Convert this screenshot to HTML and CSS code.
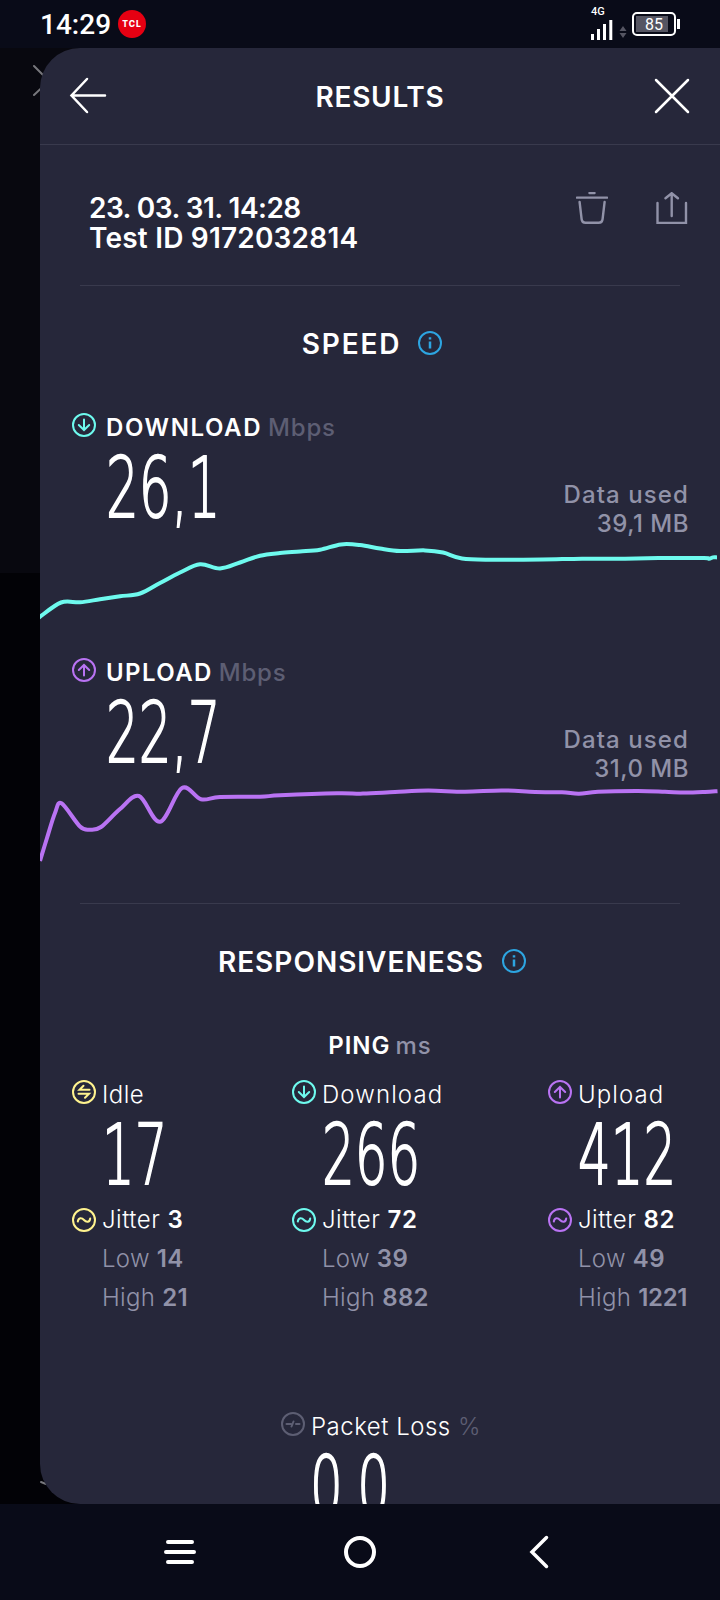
FILE: index.html
```
<!DOCTYPE html>
<html lang="en">
<head>
  <meta charset="UTF-8" />
  <meta name="viewport" content="width=device-width, initial-scale=1.0" />
  <title>Results</title>
  <link rel="stylesheet" href="styles.css">
</head>
<body>

  <!-- shared icons -->
  <svg class="defs" width="0" height="0">
    <symbol id="i-down" viewBox="0 0 24 24"><circle cx="12" cy="12" r="11" /><path d="M12 6.5v10.5M6.8 12l5.2 5 5.2-5" /></symbol>
    <symbol id="i-up" viewBox="0 0 24 24"><circle cx="12" cy="12" r="11" /><path d="M12 17.500V7M6.800 12l5.200-5 5.200 5" /></symbol>
    <symbol id="i-idle" viewBox="0 0 24 24"><circle cx="12" cy="12" r="11" /><path d="M17.500 9.800H7.500l4-4M6.500 13.800h10.500l-4 4" /></symbol>
    <symbol id="i-jitter" viewBox="0 0 24 24"><circle cx="12" cy="12" r="11" /><path d="M5.800 13.500c.6-4.200 4-4 6.200-1.500s5.600 2.700 6.200-1.500" /></symbol>
    <symbol id="i-loss" viewBox="0 0 24 24"><circle cx="12" cy="12" r="11" /><path d="M5.500 12h4.500M15 12h3.500M10.500 14.500l2-5" /></symbol>
    <symbol id="i-info" viewBox="0 0 24 24"><circle cx="12" cy="12" r="11" /><path class="i-stem" d="M12 10.500v7M12 6.200v2.200" /></symbol>
  </svg>

  <div class="status">
    <span class="clock">14:29</span>
    <span class="tcl">TCL</span>
    <span class="signal">
      <span class="net">4G</span>
      <svg width="24" height="22" viewBox="0 0 24 22"><path d="M2.500 15v6M8.500 10v11M14.500 5v16M20.800 1v20" /></svg>
    </span>
    <svg class="traffic" width="8" height="12" viewBox="0 0 8 12"><path d="M4 0l3.500 5h-7zM4 12L.5 7h7z" /></svg>
    <span class="battery"><span class="level">85</span></span>
  </div>

  <main>
    <svg class="behind" width="60" height="1456" viewBox="0 0 60 1456"><path d="M34 18l15 15-15 14M41 1434l5 2" /></svg>

    <div class="sheet">
      <header>
        <svg width="40" height="40" viewBox="0 0 40 40"><path d="M19 3L3.500 19.500 19 36M3.500 19.500H37" /></svg>
        <h1>RESULTS</h1>
        <svg width="40" height="40" viewBox="0 0 40 40"><path d="M4 4l32 32M36 4L4 36" /></svg>
      </header>

      <div class="meta">
        <div class="meta-text">
          <div class="date">23. 03. 31. 14:28</div>
          <div class="test-id">Test ID 9172032814</div>
        </div>
        <svg class="trash" width="32" height="32" viewBox="0 0 32 32"><path d="M13.500 1h5M1 5.600h30M3.600 10l2 17q.4 3.800 4 3.800h13q3.600 0 4-3.800l2-17" /></svg>
        <svg width="32" height="32" viewBox="0 0 32 32"><path d="M1.500 11v20h28.500V11M15.700 24V1.500M9.500 6.200l6.200-5 6.200 5" /></svg>
      </div>

      <div class="title">
        <h2 class="t-speed">SPEED</h2>
        <svg class="icon info"><use href="#i-info" /></svg>
      </div>

      <section class="speed">
        <div class="label">
          <svg class="icon teal"><use href="#i-down" /></svg>
          <b class="t-download">DOWNLOAD</b><span class="unit">Mbps</span>
        </div>
        <div class="reading">
          <div class="num">26,1</div>
          <div class="used">Data used<br><span class="mb">39,1 MB</span></div>
        </div>
        <svg class="chart teal" width="680" height="116" viewBox="40 530 680 116"><path id="downChart" /></svg>
      </section>

      <section class="speed">
        <div class="label">
          <svg class="icon purple"><use href="#i-up" /></svg>
          <b class="t-upload">UPLOAD</b><span class="unit">Mbps</span>
        </div>
        <div class="reading">
          <div class="num">22,7</div>
          <div class="used">Data used<br><span class="mb">31,0 MB</span></div>
        </div>
        <svg class="chart purple" width="680" height="116" viewBox="40 775 680 116"><path id="upChart" /></svg>
      </section>

      <div class="title ruled">
        <h2 class="t-resp">RESPONSIVENESS</h2>
        <svg class="icon info"><use href="#i-info" /></svg>
      </div>

      <div class="ping-title"><b>PING</b><span>ms</span></div>

      <div class="pings">
        <div class="ping">
          <div class="row"><svg class="icon yellow"><use href="#i-idle" /></svg><span>Idle</span></div>
          <div class="num">17</div>
          <div class="row jitter"><svg class="icon yellow"><use href="#i-jitter" /></svg><span>Jitter <b>3</b></span></div>
          <div class="range">Low <b>14</b><br>High <b>21</b></div>
        </div>
        <div class="ping">
          <div class="row"><svg class="icon teal"><use href="#i-down" /></svg><span class="wide">Download</span></div>
          <div class="num">266</div>
          <div class="row jitter"><svg class="icon teal"><use href="#i-jitter" /></svg><span>Jitter <b>72</b></span></div>
          <div class="range">Low <b>39</b><br>High <b>882</b></div>
        </div>
        <div class="ping">
          <div class="row"><svg class="icon purple"><use href="#i-up" /></svg><span class="wide">Upload</span></div>
          <div class="num">412</div>
          <div class="row jitter"><svg class="icon purple"><use href="#i-jitter" /></svg><span>Jitter <b>82</b></span></div>
          <div class="range">Low <b>49</b><br>High <b class="tight">1221</b></div>
        </div>
      </div>

      <div class="loss">
        <div class="row"><svg class="icon grey"><use href="#i-loss" /></svg><span>Packet Loss <span class="pct">%</span></span></div>
        <div class="num">0,0</div>
      </div>
    </div>
  </main>

  <nav>
    <svg width="40" height="40" viewBox="0 0 40 40"><path d="M8 10h24M6 20h28M8 30h24" /></svg>
    <svg width="40" height="40" viewBox="0 0 40 40"><circle cx="20" cy="20" r="14" /></svg>
    <svg width="40" height="40" viewBox="0 0 40 40"><path class="thin" d="M26.500 5.500L12 20l14.500 14.500" /></svg>
  </nav>

  <script>
    const down = [[39,617.5],[61,602.5],[80,602.3],[100,599.3],[120,596.3],[140,593.5],[160,583],[180,572.5],[200,564.3],[220,568.5],[240,562.5],[260,555.7],[280,553],[300,551.5],[320,549.7],[341,544.4],[360,545],[380,548.5],[400,551],[425,550.4],[443,552.5],[462,558.5],[492,559.7],[542,559.5],[582,558.7],[625,558.7],[665,558],[704,558],[709,558.8],[713,557.4],[717,557.4]];
    const up = [[40,861],[47,838],[55,813],[61.5,803.3],[80,826.5],[90,829.7],[101,827],[120,809],[139,796],[160,821.8],[182,788],[201,799.3],[220,797],[260,796.7],[280,795.3],[337,793.3],[363,793.6],[395,792],[428,790.6],[465,791.7],[502,790.4],[535,792],[562,792.3],[579,793.7],[598,791.7],[638,791],[665,791.8],[685,792.6],[705,792],[717.5,791.2]];

    // smooth line through all the samples
    function drawLine(id, pts) {
      let d = `M${pts[0][0]} ${pts[0][1]}`;
      for (let i = 0; i < pts.length - 1; i++) {
        const p0 = pts[i - 1] || pts[i], p1 = pts[i], p2 = pts[i + 1], p3 = pts[i + 2] || p2;
        d += `C${p1[0] + (p2[0] - p0[0]) / 6} ${p1[1] + (p2[1] - p0[1]) / 6} ${p2[0] - (p3[0] - p1[0]) / 6} ${p2[1] - (p3[1] - p1[1]) / 6} ${p2[0]} ${p2[1]}`;
      }
      document.getElementById(id).setAttribute("d", d);
    }

    drawLine("downChart", down);
    drawLine("upChart", up);
  </script>

</body>
</html>
```
FILE: styles.css
```
html, body {
  margin: 0;
  padding: 0;
  width: 720px;
  height: 1600px;
  overflow: hidden;
  background-color: #090b18;
  color: #fff;
  font-family: Inter, "Liberation Sans", sans-serif;
}

body {
  display: flex;
  flex-direction: column;
}

svg {
  flex: none;
  display: block;
  fill: none;
  stroke: currentColor;
  stroke-width: 2;
  stroke-linecap: round;
}

.defs {
  position: absolute;
}

/* status bar */
.status {
  display: flex;
  align-items: center;
  height: 48px;
  flex: none;
  padding: 0 40px;
}

.clock {
  width: 78px;
  font: 500 28px/50px Roboto, sans-serif;
  padding-top: 2px;
}

.tcl {
  width: 28px;
  height: 28px;
  border-radius: 50%;
  background: #e60012;
  font-size: 8.5px;
  font-weight: 800;
  line-height: 28px;
  letter-spacing: 0.9px;
  text-align: center;
}

.signal {
  margin-left: auto;
  width: 24px;
  height: 33px;
}

.signal svg {
  stroke-width: 3;
  stroke-linecap: butt;
  margin-left: -1px;
}

.net {
  display: block;
  font: 500 11px/8px Roboto, sans-serif;
  margin-bottom: 3px;
}

.traffic {
  margin: 15px 5px 0 4px;
  fill: #555562;
  stroke: none;
}

.battery {
  position: relative;
  box-sizing: border-box;
  width: 44px;
  height: 24px;
  margin-right: 4px;
  padding: 2px;
  border: 2px solid #fff;
  border-radius: 5px;
}

.battery::after {
  content: "";
  position: absolute;
  right: -6px;
  top: 5px;
  width: 3px;
  height: 10px;
  background: #fff;
}

.level {
  display: block;
  height: 16px;
  background: linear-gradient(90deg, #555562 32px, transparent 32px);
  font: 400 16px/17px Roboto, sans-serif;
  text-align: center;
}

/* sheet over the dimmed page */
main {
  position: relative;
  height: 1456px;
  flex: none;
  background: linear-gradient(#08080f 525px, #020206 525px);
}

.behind {
  position: absolute;
  left: 0;
  top: 0;
  color: #77777c;
}

.sheet {
  position: relative;
  height: 1456px;
  margin-left: 40px;
  border-radius: 40px 0 0 40px;
  background: #26273a;
  overflow: hidden;
}

header {
  display: flex;
  align-items: center;
  justify-content: space-between;
  height: 96px;
  padding: 0 28px;
  border-bottom: 1px solid #393a4d;
}

header svg {
  stroke-width: 2.500;
}

h1, h2 {
  margin: 0;
  font-size: 28px;
  font-weight: 600;
}

h1 {
  padding-top: 2px;
  letter-spacing: 0.7px;
}

.t-speed {
  letter-spacing: 1.8px;
  margin-right: -2px;
}

.t-resp {
  letter-spacing: 1px;
  margin-right: -1px;
}

.meta {
  display: flex;
  height: 92px;
  margin: 0 40px;
  padding: 48px 0 0 9px;
  border-bottom: 1px solid #393a4d;
}

.meta-text {
  flex: 1;
  font-size: 28px;
  font-weight: 600;
  line-height: 30px;
}

.date {
  letter-spacing: -0.55px;
}

.test-id {
  letter-spacing: 0.2px;
}

.meta svg {
  color: #9192a8;
  stroke-width: 2.400;
  margin: -1px -8px 0 48px;
}

.meta .trash {
  margin-right: 0;
}

.title {
  display: flex;
  align-items: center;
  justify-content: center;
  gap: 19px;
  height: 115px;
  padding-right: 16px;
}

.title .icon {
  margin-top: -1px;
}

.ruled {
  margin: 12px 40px 0;
  border-top: 1px solid #393a4d;
}

.icon {
  width: 24px;
  height: 24px;
}

.teal { color: #6efaee; }
.purple { color: #b973f3; }
.yellow { color: #fff38e; }
.grey { color: #5d5e73; }
.info { color: #2da5e1; }

.i-stem {
  stroke-linecap: butt;
  stroke-width: 2.500;
}

/* download / upload blocks */
.speed {
  height: 233px;
  padding-top: 12px;
}

.label {
  display: flex;
  height: 24px;
  padding-left: 32px;
  font-size: 24px;
  line-height: 29px;
}

.label b {
  margin-left: 10px;
  font-weight: 600;
}

.t-download {
  letter-spacing: 1.6px;
}

.t-upload {
  letter-spacing: 1.4px;
}

.unit {
  margin-left: 6px;
  color: #5d5e73;
  font-weight: 500;
  letter-spacing: 0.8px;
}

.reading {
  display: flex;
  justify-content: space-between;
  height: 93px;
  padding: 0 32px 0 66px;
}

/* tall narrow digits */
.num {
  padding-top: 12px;
  font: 200 83px/80px "DejaVu Sans", sans-serif;
  -webkit-text-stroke: 2px #fff;
  transform: scaleX(0.62);
  transform-origin: left;
  white-space: nowrap;
}

.used {
  padding-top: 43px;
  color: #9192a8;
  font-size: 24px;
  font-weight: 500;
  line-height: 29px;
  letter-spacing: 1.1px;
  margin-right: -1px;
  text-align: right;
}

.mb {
  letter-spacing: 0.5px;
}

.chart {
  stroke-width: 4;
  stroke-linecap: butt;
}

/* ping */
.ping-title {
  display: flex;
  justify-content: center;
  gap: 5px;
  font-size: 24px;
  line-height: 53px;
}

.ping-title b {
  font-weight: 600;
  letter-spacing: 1px;
}

.ping-title span {
  color: #9192a8;
  font-weight: 500;
  letter-spacing: 1px;
}

.pings {
  display: grid;
  grid-template-columns: 220px 256px 1fr;
  padding: 8px 0 0 32px;
}

.row {
  display: flex;
  gap: 6px;
  height: 24px;
  font-size: 24px;
  font-weight: 350;
  line-height: 30px;
  letter-spacing: 0.5px;
  white-space: nowrap;
}

.wide {
  letter-spacing: 1.1px;
}

.jitter {
  line-height: 24px;
}

.row b, .range b {
  font-weight: 600;
}

.ping .num {
  height: 92px;
  margin-left: 30px;
}

.range {
  padding: 7px 0 0 30px;
  color: #9192a8;
  font-size: 24px;
  font-weight: 350;
  line-height: 39px;
  letter-spacing: 0.3px;
}

.tight {
  letter-spacing: -0.3px;
}

.loss {
  margin: 95px 0 0 241px;
}

.loss .num {
  margin-left: 29px;
  letter-spacing: -1.5px;
}

.pct {
  color: #5d5e73;
}

/* system navigation */
nav {
  display: flex;
  justify-content: center;
  gap: 140px;
  height: 68px;
  padding-top: 28px;
}

nav svg {
  stroke-width: 4;
}

.thin {
  stroke-width: 3.500;
}
```
